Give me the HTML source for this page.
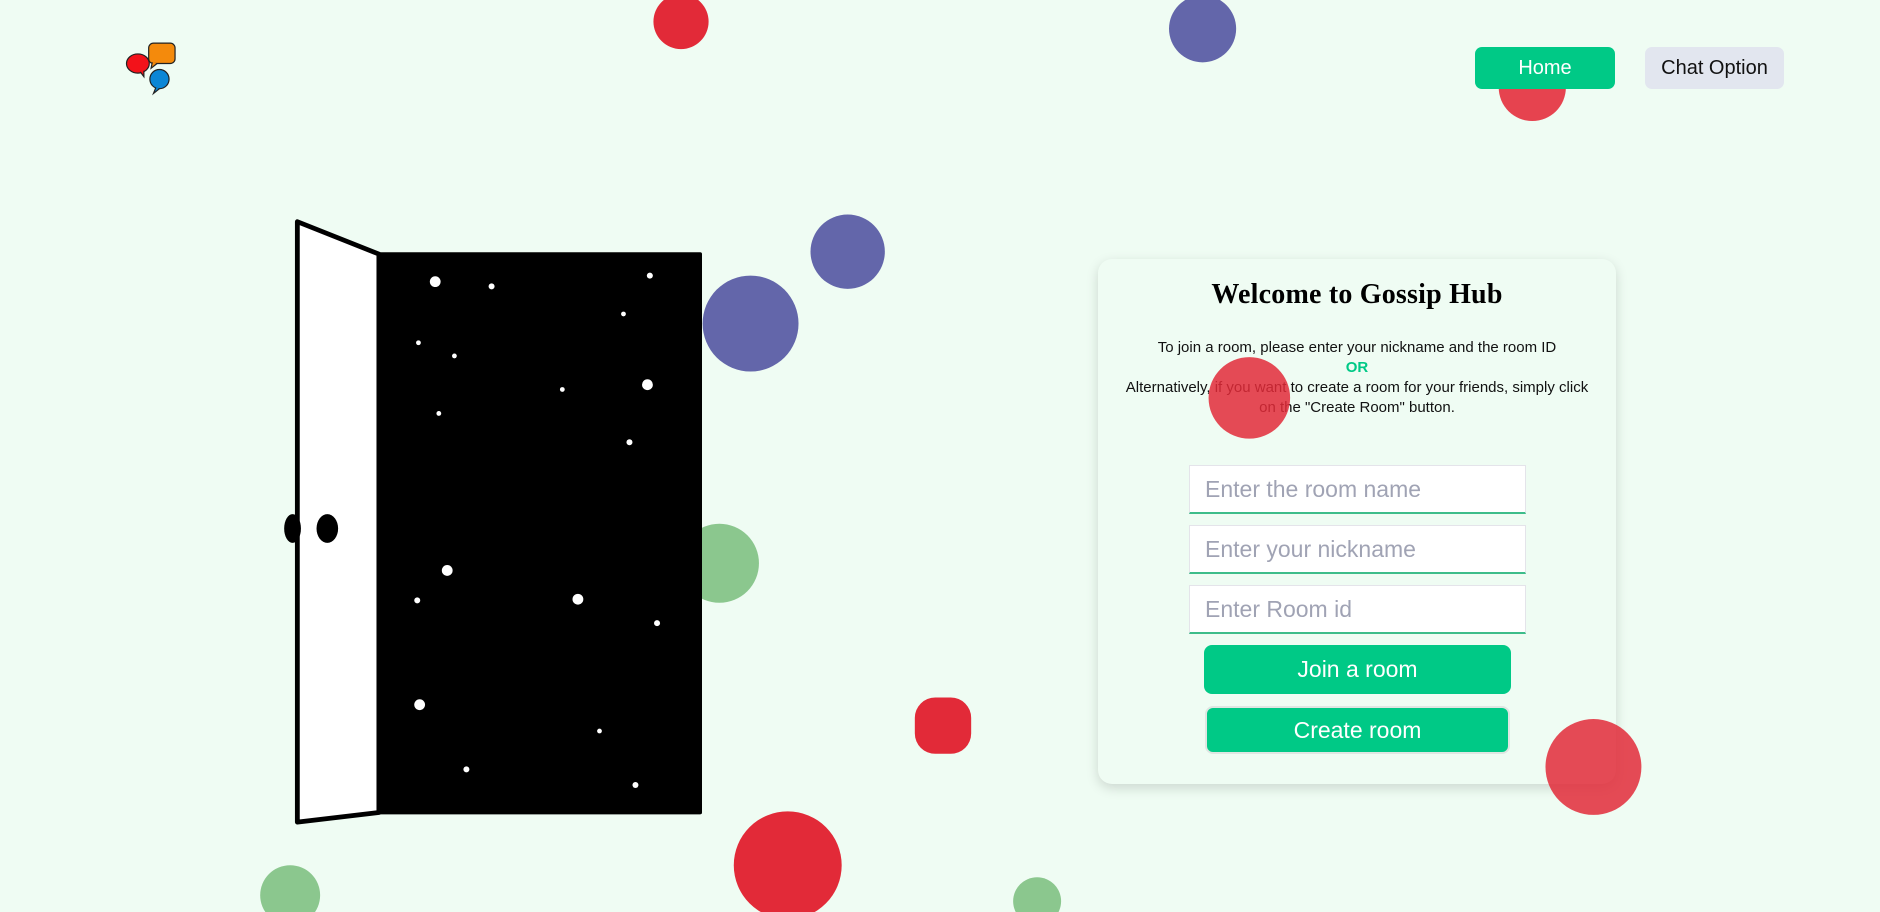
<!DOCTYPE html>
<html><head><meta charset="utf-8"><style>
*{margin:0;padding:0;box-sizing:border-box}
body{width:1880px;height:912px;background:#effcf3;position:relative;overflow:hidden;font-family:"Liberation Sans",sans-serif}
svg.bg{position:absolute;left:0;top:0;width:1880px;height:912px}
.nav{position:absolute;top:47px;height:42px;border-radius:7px;font-size:20px;line-height:42px;text-align:center}
.card{position:absolute;left:1098px;top:259px;width:518px;height:525px;border-radius:14px;background:#effcf3;box-shadow:0 4px 12px rgba(0,0,0,.15);text-align:center}
.card h1{font-family:"Liberation Serif",serif;font-size:28px;font-weight:bold;margin-top:20px;letter-spacing:.2px}
.card p{font-size:15px;line-height:20px;margin-top:27px;color:#111}
.inp{position:absolute;left:91px;width:337px;height:49px;background:#fff;border:1px solid #e4e4ea;border-bottom:2px solid #3dbd8a;font-size:23px;color:#a0a3b4;line-height:47px;text-align:left;padding-left:15px}
.btn{position:absolute;background:#00c986;color:#fff;font-size:23px;border-radius:8px;text-align:center}
</style></head><body>
<svg class="bg" viewBox="0 0 1568 761" preserveAspectRatio="none">
<g>
<circle cx="568" cy="18" r="23" fill="#e22a38"/>
<circle cx="1003" cy="24" r="28" fill="#6366aa"/>
<circle cx="1278" cy="73" r="28" fill="#e6434f"/>
<circle cx="707" cy="210" r="31" fill="#6366aa"/>
<circle cx="626" cy="270" r="40" fill="#6366aa"/>
<circle cx="600" cy="470" r="33" fill="#8bc78e"/>
<rect x="763" y="582" width="47" height="47" rx="17" fill="#e22a38"/>
<circle cx="657" cy="722" r="45" fill="#e22a38"/>
<circle cx="242" cy="747" r="25" fill="#8bc78e"/>
<circle cx="865" cy="752" r="20" fill="#8bc78e"/>
</g>
<rect x="316" y="212" width="268" height="466" fill="#000" stroke="#000" stroke-width="3" stroke-linejoin="round"/>
<polygon points="248,185 316,212 316,678 248,686" fill="#fff" stroke="#000" stroke-width="4" stroke-linejoin="round"/>
<ellipse cx="244" cy="441" rx="7" ry="12" fill="#000"/>
<ellipse cx="273" cy="441" rx="9" ry="12" fill="#000"/>
<g fill="#fff">
<circle cx="363" cy="235" r="4.5"/><circle cx="410" cy="239" r="2.5"/><circle cx="542" cy="230" r="2.5"/><circle cx="520" cy="262" r="2"/><circle cx="349" cy="286" r="2"/><circle cx="379" cy="297" r="2"/><circle cx="469" cy="325" r="2"/><circle cx="540" cy="321" r="4.5"/><circle cx="366" cy="345" r="2"/><circle cx="525" cy="369" r="2.5"/><circle cx="373" cy="476" r="4.5"/><circle cx="348" cy="501" r="2.5"/><circle cx="482" cy="500" r="4.5"/><circle cx="548" cy="520" r="2.5"/><circle cx="350" cy="588" r="4.5"/><circle cx="500" cy="610" r="2"/><circle cx="389" cy="642" r="2.5"/><circle cx="530" cy="655" r="2.5"/>
</g>
<g stroke="#222" stroke-width="1">
<rect x="124" y="36" width="22" height="17" rx="4" fill="#f48a0c"/><path d="M127 52 l-1 5 l5 -4" fill="#f48a0c"/>
<ellipse cx="115" cy="53" rx="9.5" ry="8" fill="#f3121a"/><path d="M117 60 l3 4 l0 -5" fill="#f3121a"/>
<circle cx="133" cy="66" r="8" fill="#0c86d6"/><path d="M130 73 l-2 5 l5 -4" fill="#0c86d6"/>
</g>
</svg>
<div class="nav" style="left:1475px;width:140px;background:#00c986;color:#fff">Home</div>
<div class="nav" style="left:1645px;width:139px;background:#e2e6ef;color:#111">Chat Option</div>
<div class="card">
<h1>Welcome to Gossip Hub</h1>
<p>To join a room, please enter your nickname and the room ID<br><b style="color:#00c986">OR</b><br>Alternatively, if you want to create a room for your friends, simply click<br>on the "Create Room" button.</p>
<div class="inp" style="top:206px">Enter the room name</div>
<div class="inp" style="top:266px">Enter your nickname</div>
<div class="inp" style="top:326px">Enter Room id</div>
<div class="btn" style="left:106px;top:386px;width:307px;height:49px;line-height:49px">Join a room</div>
<div class="btn" style="left:107px;top:447px;width:305px;height:48px;line-height:44px;border:2px solid #dfe6e2">Create room</div>
</div>
<svg class="bg" viewBox="0 0 1568 761" preserveAspectRatio="none" style="pointer-events:none">
<circle cx="1042" cy="332" r="34" fill="#e22a38" opacity=".85"/>
<circle cx="1329" cy="640" r="40" fill="#e22a38" opacity=".85"/>
</svg>
</body></html>
